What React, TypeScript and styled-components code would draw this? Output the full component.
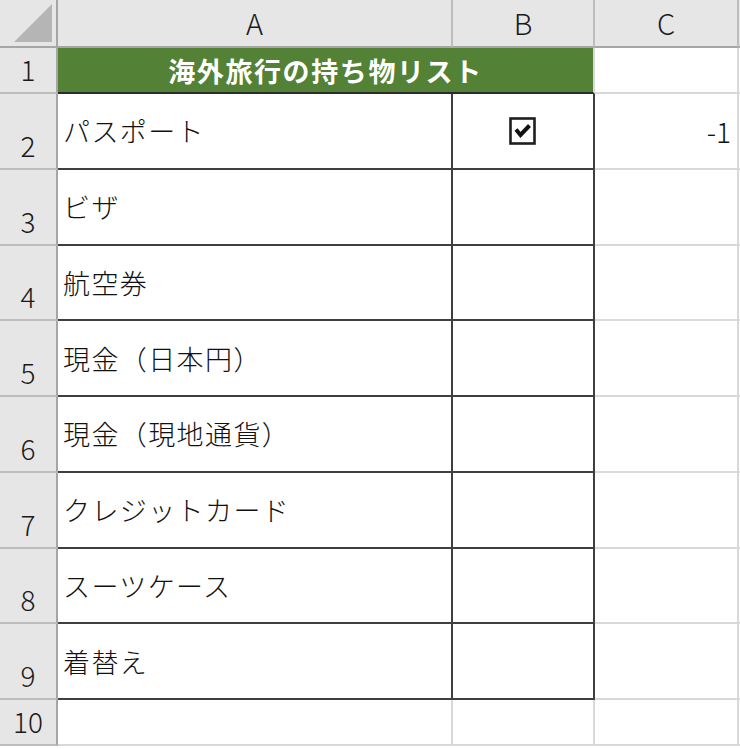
import React from "react";
import styled, { createGlobalStyle } from "styled-components";

const Global = createGlobalStyle`
  html, body { margin: 0; padding: 0; background: #ffffff; }
  body { font-family: "Noto Sans CJK JP", "Noto Sans", sans-serif; overflow: hidden; }
`;

const GRID = "#d9d9d9";
const DARK = "#3f3f3f";
const HEAD_BG = "#e6e6e6";
const HEAD_LINE = "#bdbdbd";
const HEAD_EDGE = "#a6a6a6";

const Sheet = styled.div`
  display: grid;
  grid-template-columns: 58px 395px 142px 144px 1fr;
  grid-template-rows: 48px 46px repeat(8, 75.75px) 46px 20px;
  width: 740px;
  height: 749px;
  overflow: hidden;
  background: #fff;
`;

const Corner = styled.div`
  box-sizing: border-box;
  background: ${HEAD_BG};
  border-right: 2px solid ${HEAD_EDGE};
  border-bottom: 2px solid ${HEAD_EDGE};
  display: flex;
  align-items: flex-end;
  justify-content: flex-end;
  padding: 0 3px 3px 0;
`;

const ColHead = styled.div`
  box-sizing: border-box;
  background: ${HEAD_BG};
  border-right: 2px solid ${HEAD_LINE};
  border-bottom: 2px solid ${HEAD_EDGE};
  display: flex;
  align-items: center;
  justify-content: center;
  font-size: 29px;
  font-weight: 300;
  color: #1a1a1a;
  padding-bottom: 2px;
`;

const RowHead = styled.div`
  box-sizing: border-box;
  background: ${HEAD_BG};
  border-right: 2px solid ${HEAD_EDGE};
  border-bottom: 2px solid ${HEAD_LINE};
  display: flex;
  align-items: flex-end;
  justify-content: center;
  font-size: 28px;
  font-weight: 300;
  line-height: 1;
  color: #1a1a1a;
  padding-bottom: 9px;
`;

const Cell = styled.div<{ $right?: boolean; $bottom?: boolean; $align?: string }>`
  box-sizing: border-box;
  border-right: 2px solid ${(p) => (p.$right ? DARK : GRID)};
  border-bottom: 2px solid ${(p) => (p.$bottom ? DARK : GRID)};
  display: flex;
  align-items: center;
  justify-content: ${(p) => p.$align || "flex-start"};
  padding: 0 6px 0 5px;
  font-size: 27px;
  font-weight: 300;
  letter-spacing: 1.4px;
  color: #111;
  white-space: nowrap;
  overflow: hidden;
`;

const Title = styled.div`
  grid-column: span 2;
  box-sizing: border-box;
  background: #538135;
  border-bottom: 2px solid #2b2b2b;
  border-right: 2px solid ${GRID};
  display: flex;
  align-items: center;
  justify-content: center;
  font-size: 27px;
  font-weight: 700;
  letter-spacing: 1.6px;
  color: #ffffff;
  white-space: nowrap;
`;

const Num = styled.span`
  font-size: 28px;
  letter-spacing: 0;
`;

const Spacer = styled.div`
  box-sizing: border-box;
  border-bottom: 2px solid ${GRID};
`;

const Corner2 = styled.div`
  background: ${HEAD_BG};
  border-bottom: 2px solid ${HEAD_EDGE};
`;

const CheckBox = () => (
  <svg width="28" height="28" viewBox="0 0 28 28">
    <rect x="1.5" y="1.5" width="24" height="25" fill="#fff" stroke="#1e1e1e" strokeWidth="2.6" />
    <path
      d="M7 12.5 L11.5 18 L20.5 8.5"
      fill="none"
      stroke="#111"
      strokeWidth="4"
      strokeLinejoin="miter"
      strokeLinecap="butt"
    />
  </svg>
);

const items = [
  "パスポート",
  "ビザ",
  "航空券",
  "現金（日本円）",
  "現金（現地通貨）",
  "クレジットカード",
  "スーツケース",
  "着替え",
];

export default function App() {
  return (
    <>
      <Global />
      <Sheet>
        <Corner>
          <svg width="40" height="40" viewBox="0 0 40 40">
            <polygon points="39,1 39,39 1,39" fill="#b5b5b5" />
          </svg>
        </Corner>
        <ColHead>A</ColHead>
        <ColHead>B</ColHead>
        <ColHead>C</ColHead>
        <Corner2 />

        <RowHead>1</RowHead>
        <Title>海外旅行の持ち物リスト</Title>
        <Cell />
        <Spacer />

        {items.map((item, i) => (
          <React.Fragment key={item}>
            <RowHead>{i + 2}</RowHead>
            <Cell $right $bottom>{item}</Cell>
            <Cell $right $bottom $align="center">
              {i === 0 ? <CheckBox /> : null}
            </Cell>
            <Cell $align="flex-end">{i === 0 ? <Num>-1</Num> : null}</Cell>
            <Spacer />
          </React.Fragment>
        ))}

        <RowHead>10</RowHead>
        <Cell />
        <Cell />
        <Cell />
        <Spacer />
      </Sheet>
    </>
  );
}
